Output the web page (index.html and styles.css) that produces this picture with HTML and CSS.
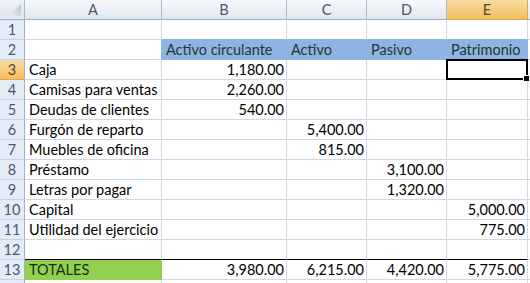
FILE: index.html
```html
<!DOCTYPE html>
<html>
<head>
<meta charset="utf-8">
<link rel="stylesheet" href="styles.css">
</head>
<body>
<div class="sheet">
  <div class="ch corner"><svg width="24" height="19" viewBox="0 0 24 19"><defs><linearGradient id="g" x1="0" y1="1" x2="1" y2="0"><stop offset="0" stop-color="#e8eef6"/><stop offset="1" stop-color="#b9c6d8"/></linearGradient></defs><polygon points="9,16 21,16 21,4" fill="url(#g)"/></svg></div>
  <div class="ch">A</div><div class="ch">B</div><div class="ch">C</div><div class="ch">D</div><div class="ch sel">E</div><div class="ch last"></div>

  <div class="rh">1</div><div class="c"></div><div class="c blue-top"></div><div class="c blue-top"></div><div class="c blue-top"></div><div class="c blue-top"></div><div class="c last"></div>

  <div class="rh">2</div><div class="c blue-left"></div><div class="c blue">Activo circulante</div><div class="c blue">Activo</div><div class="c blue">Pasivo</div><div class="c blue">Patrimonio</div><div class="c last"></div>

  <div class="rh sel">3</div><div class="c">Caja</div><div class="c n">1,180.00</div><div class="c"></div><div class="c"></div><div class="c active"><span class="selbox"><span class="handle"></span></span></div><div class="c last"></div>

  <div class="rh">4</div><div class="c">Camisas para ventas</div><div class="c n">2,260.00</div><div class="c"></div><div class="c"></div><div class="c"></div><div class="c last"></div>

  <div class="rh">5</div><div class="c">Deudas de clientes</div><div class="c n">540.00</div><div class="c"></div><div class="c"></div><div class="c"></div><div class="c last"></div>

  <div class="rh">6</div><div class="c">Furgón de reparto</div><div class="c"></div><div class="c n">5,400.00</div><div class="c"></div><div class="c"></div><div class="c last"></div>

  <div class="rh">7</div><div class="c">Muebles de oficina</div><div class="c"></div><div class="c n">815.00</div><div class="c"></div><div class="c"></div><div class="c last"></div>

  <div class="rh">8</div><div class="c">Préstamo</div><div class="c"></div><div class="c"></div><div class="c n">3,100.00</div><div class="c"></div><div class="c last"></div>

  <div class="rh">9</div><div class="c">Letras por pagar</div><div class="c"></div><div class="c"></div><div class="c n">1,320.00</div><div class="c"></div><div class="c last"></div>

  <div class="rh">10</div><div class="c">Capital</div><div class="c"></div><div class="c"></div><div class="c"></div><div class="c n">5,000.00</div><div class="c last"></div>

  <div class="rh">11</div><div class="c">Utilidad del ejercicio</div><div class="c"></div><div class="c"></div><div class="c"></div><div class="c n">775.00</div><div class="c last"></div>

  <div class="rh">12</div><div class="c line"></div><div class="c line"></div><div class="c line"></div><div class="c line"></div><div class="c line"></div><div class="c last"></div>

  <div class="rh">13</div><div class="c green">TOTALES</div><div class="c n">3,980.00</div><div class="c n">6,215.00</div><div class="c n">4,420.00</div><div class="c n">5,775.00</div><div class="c last"></div>

  <div class="rh"></div><div class="c"></div><div class="c"></div><div class="c"></div><div class="c"></div><div class="c"></div><div class="c last"></div>
</div>
</body>
</html>
```

FILE: styles.css
```css
html, body {
  margin: 0;
  padding: 0;
  background: #ffffff;
  overflow: hidden;
}

.sheet {
  display: grid;
  grid-template-columns: 25px 137px 125px 80px 80px 81px 1fr;
  grid-auto-rows: 20px;
  width: 530px;
  font-family: Lato, "Liberation Sans", Arial, sans-serif;
  font-size: 14.5px;
  color: #000;
}

.ch, .rh, .c {
  box-sizing: border-box;
  line-height: 20px;
  white-space: nowrap;
  overflow: hidden;
}

.ch {
  background: linear-gradient(#f7f9fc, #dfe6ef);
  border-right: 1px solid #a9bbd1;
  border-bottom: 1px solid #9eb3cb;
  text-align: center;
  color: #4a5870;
  line-height: 19px;
}

.ch.corner {
  padding: 0;
  line-height: 0;
  background: linear-gradient(#eef2f8, #dfe6ef);
}

.ch.sel {
  background: linear-gradient(#f9dba3, #f1bf5e);
  border-right-color: #e6a74a;
  border-bottom-color: #e6a74a;
  color: #5a4a30;
}

.ch.last, .c.last {
  border-right: none;
}

.rh {
  background: #e4ecf7;
  border-right: 1px solid #9eb3cb;
  border-bottom: 1px solid #c5d2e3;
  text-align: center;
  color: #4a5870;
}

.rh.sel {
  background: linear-gradient(#f9dba3, #f1bf5e);
  border-bottom-color: #e6a74a;
  color: #5a4a30;
}

.c {
  border-right: 1px solid #d0d7e5;
  border-bottom: 1px solid #d0d7e5;
  padding: 0 2px 0 4px;
}

.c.n {
  text-align: right;
}

.c.blue-top {
  border-bottom-color: #8db4e2;
}

.c.blue-left {
  border-right-color: #8db4e2;
}

.c.blue {
  background: #8db4e2;
  border-right-color: #8db4e2;
  border-bottom-color: #8db4e2;
  color: #1f3a2c;
}

.c.line {
  border-bottom-color: #000;
}

.c.green {
  background: #92d050;
  border-right-color: #92d050;
  border-bottom-color: #92d050;
  color: #15300f;
}

.c.active {
  position: relative;
  overflow: visible;
}

.selbox {
  position: absolute;
  left: -1px;
  top: -1px;
  right: -1px;
  bottom: -1px;
  border: 2px solid #000;
}

.handle {
  position: absolute;
  right: -4px;
  bottom: -4px;
  width: 5px;
  height: 5px;
  background: #000;
  border: 1px solid #fff;
}
```
